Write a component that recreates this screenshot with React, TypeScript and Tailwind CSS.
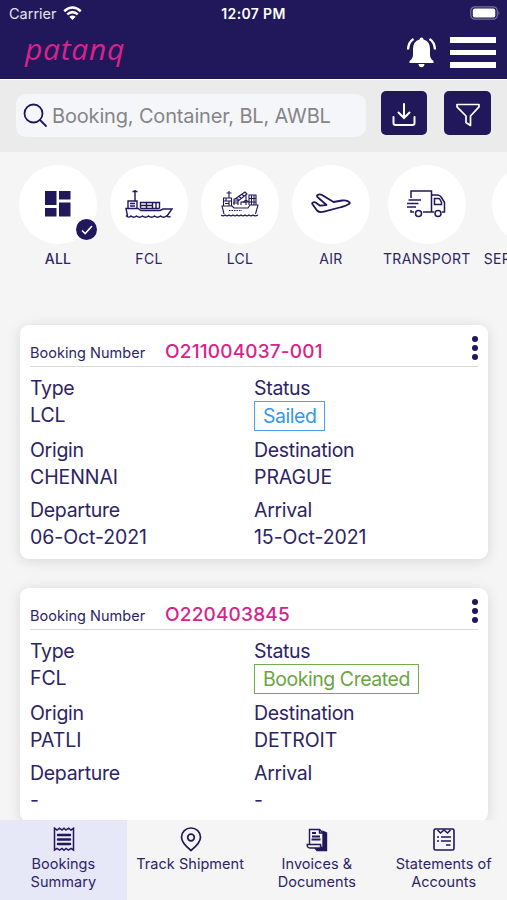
import React from "react";

type Booking = {
  number: string;
  type: string;
  status: string;
  statusStyle: string;
  origin: string;
  destination: string;
  departure: string;
  arrival: string;
};

const bookings: Booking[] = [
  {
    number: "O211004037-001",
    type: "LCL",
    status: "Sailed",
    statusStyle: "border-[#4aa3e8] text-[#3498e8]",
    origin: "CHENNAI",
    destination: "PRAGUE",
    departure: "06-Oct-2021",
    arrival: "15-Oct-2021",
  },
  {
    number: "O220403845",
    type: "FCL",
    status: "Booking Created",
    statusStyle: "border-[#73ad4d] text-[#6ba544]",
    origin: "PATLI",
    destination: "DETROIT",
    departure: "-",
    arrival: "-",
  },
];

const AllIcon = () => (
  <svg width="26" height="26" viewBox="0 0 26 26" fill="#21175b">
    <path d="M0 0h11.5v14H0zM14 0h11.5v8.5H14zM0 17h11.5v8.5H0zM14 11.5h11.5v14H14z" />
  </svg>
);

const ShipIcon = () => (
  <svg width="48" height="30" viewBox="0 0 48 30" fill="none" stroke="#21175b" strokeWidth="1.4">
    <path d="M10 12V1M7.500 2.500h5M3 19v-7h9v7M5 14.500h5M5 17h5" />
    <path d="M15.500 19.500v-6h19v6M15.500 19.500h19M21.500 13.500v6M27.500 13.500v6M31 13.500v6M15.500 16.500h12" />
    <path d="M2.500 27 1 19.500h12l3 2h19l3-1.500h9l-5 7" />
    <path d="M1 26.500q2.500 3 5 .5 2.500 2.500 5.500 0 3 2.500 6 0 3 2.500 6 0 3 2.500 6 0 3 2.500 6 0 3 2.500 6 0 2 1.500 4 .500" />
  </svg>
);

const CraneShipIcon = () => (
  <svg width="38" height="27" viewBox="0 0 38 27" fill="none" stroke="#21175b" strokeWidth="1.100">
    <path d="M8 8V1M5.500 3h5M2.500 16V8h8v8M2.500 11h8M5 8v3M8 11v5M4 13.500h4" />
    <path d="M13 15V9h4v6M13 11h4M14 9l10-7 2 2-9 7M18 6.500l2 1.500M21 4.500l2 1.500M25 4v6M22.500 12l2.500-2 2.500 2zM12 13h5" />
    <path d="M28 15V5h7v10M30.500 5v10M33 5v10M28 8.500h7M28 12h7M20 15v-3h5v3" />
    <path d="M3 24 1 16h10l2 2h14l2-3h8l-2.500 9" />
    <path d="M8 20.500h13" strokeDasharray="1.500 1" />
    <path d="M0 25q2 1.800 4 0 2 1.800 4 0 2 1.800 4 0 2 1.800 4 0 2 1.800 4 0 2 1.800 4 0 2 1.800 4 0 2 1.800 4 0 2 1.800 5 0" />
  </svg>
);

const PlaneIcon = () => (
  <svg width="40" height="22" viewBox="0 0 40 22" fill="none" stroke="#21175b" strokeWidth="1.800" strokeLinejoin="round">
    <path d="M6 2.500Q8.500.5 11 2l11.500 7 8.500-1.500q5-.8 7.500 1.800.8.900-.6 1.800-3 2-7.400 2.900L13 18.700q-4.500 1.300-7-1.200L1.300 11q-.5-1.200 1-1.700 1.500-.4 2.700.4l4 3 6.500-.7-8-7q-1.800-1.300-1.500-2.500z" />
  </svg>
);

const TruckIcon = () => (
  <svg width="40" height="28" viewBox="0 0 40 28" fill="none" stroke="#21175b" strokeWidth="1.500">
    <path d="M5 8V1h20.500v21H17M5 20v2h3M2.500 10H15M1 13.500h11.500M1 17h9M25.500 5h6q2.500 0 4 2.500l3 5V22h-2.500M28 22h-2.500" />
    <path d="M28.500 8.500h4q1 0 1.500 1l1.500 3v2h-7z" />
    <circle cx="12.500" cy="23.500" r="3" />
    <circle cx="32" cy="23.500" r="3" />
  </svg>
);

const categories = [
  { label: "ALL", icon: <AllIcon />, active: true },
  { label: "FCL", icon: <ShipIcon /> },
  { label: "LCL", icon: <CraneShipIcon /> },
  { label: "AIR", icon: <PlaneIcon /> },
  { label: "TRANSPORT", icon: <TruckIcon /> },
  { label: "SERVICES", icon: null },
];

const ReceiptIcon = () => (
  <svg width="22" height="25" viewBox="0 0 22 25" fill="none" stroke="#21175b" strokeWidth="1.500">
    <path d="M1.500 1.200 4 3l2.500-1.800L9 3l2-1.800L13 3l2.500-1.800L18 3l2.500-1.800v22L18 21.500l-2.500 1.700-2.500-1.700-2 1.700-2-1.700-2.500 1.700L4 21.500l-2.500 1.700z" />
    <path d="M5 8h12M5 12.500h12M5 17h12" strokeWidth="2.400" strokeLinecap="round" />
  </svg>
);

const PinIcon = () => (
  <svg width="22" height="25" viewBox="0 0 22 25" fill="none" stroke="#21175b" strokeWidth="1.700">
    <path d="M11 23.500Q1.500 16 1.500 10.300a9.500 9.300 0 0 1 19 0Q20.500 16 11 23.500z" />
    <circle cx="11" cy="10.500" r="3.300" />
  </svg>
);

const InvoiceIcon = () => (
  <svg width="22" height="24" viewBox="0 0 22 24" fill="none" stroke="#21175b" strokeWidth="1.400">
    <path d="M17 3.500 20.500 5v17.500H11L9 20l8-1z" fill="#21175b" />
    <path d="M3.500 16V1.500h10L17 5v15q-2.500 0-2.500-3.500H1.200Q1 20 4 20h13" fill="#f5f5f5" />
    <path d="M6 5h4M6 8.500h8M5.500 11.500h9" strokeWidth="1.800" />
    <path d="M13.500 1.500V5H17" />
  </svg>
);

const StatementIcon = () => (
  <svg width="22" height="23" viewBox="0 0 22 23" fill="none" stroke="#21175b" strokeWidth="1.600">
    <rect x="1" y="1" width="20" height="21" rx="1.500" />
    <path d="m4.500 2 3 3L11 2l3.500 3 3-3" />
    <path d="M4 9h2M8 9h10M4 13h2M8 13h10M13 17h4.500" strokeWidth="1.700" />
  </svg>
);

const tabs = [
  { lines: ["Bookings", "Summary"], icon: <ReceiptIcon />, active: true },
  { lines: ["Track Shipment"], icon: <PinIcon /> },
  { lines: ["Invoices &", "Documents"], icon: <InvoiceIcon /> },
  { lines: ["Statements of", "Accounts"], icon: <StatementIcon /> },
];

const StatusBar = () => (
  <div className="flex h-[28px] items-center px-[9px] text-[14.500px] leading-none text-white">
    <div className="flex flex-1 items-center gap-[6px]">
      <span className="text-[#e6e4f0]">Carrier</span>
      <svg width="19" height="14" viewBox="0 0 19 14" fill="none" stroke="#fff" strokeWidth="2.500" className="-mt-[2px]">
        <path d="M1.200 5.200q8.300-7.400 16.600 0M4.200 8.400q5.300-4.600 10.600 0" />
        <path d="M6.300 10.700q3.200-2.600 6.400 0L9.500 14z" fill="#fff" stroke="none" />
      </svg>
    </div>
    <span className="text-[14px] font-semibold tracking-[0.35px]">12:07 PM</span>
    <div className="flex flex-1 justify-end">
      <svg width="31" height="14" viewBox="0 0 31 14" className="-mt-[2px] -mr-[3px]">
        <rect x="0.800" y="0.800" width="26.500" height="12.400" rx="4" fill="none" stroke="#77719c" strokeWidth="1.200" />
        <rect x="2.800" y="2.600" width="22.500" height="8.800" rx="2" fill="#fff" />
        <path d="M28.500 5q2 2 0 4z" fill="#77719c" />
      </svg>
    </div>
  </div>
);

const Header = () => (
  <header className="h-[79px] shrink-0 bg-[#21175b]">
    <StatusBar />
    <div className="flex h-[49px] items-center pr-[11px] pl-[25px]">
      <span className="mb-[7px] flex-1 font-['Open_Sans',sans-serif] text-[30px] leading-[30px] tracking-[0.7px] text-[#d8238b] italic">
        patanq
      </span>
      <svg width="31" height="31" viewBox="0 0 31 31" fill="#fff">
        <path d="M15.500.5a2 2 0 0 1 2 2q6.500 2 6.500 9v6q0 4 3.500 6.500V26h-24v-2Q7 21.500 7 17.500v-6q0-7 6.500-9a2 2 0 0 1 2-2zM12.500 27h6q-.5 3.300-3 3.300t-3-3.300z" />
        <path d="M7.500 2Q2.500 5 2 12.500M23.500 2q5 3 5.500 10.500" fill="none" stroke="#fff" strokeWidth="2.300" />
      </svg>
      <div className="ml-[13px] flex flex-col gap-[7px]">
        <div className="h-[5.500px] w-[46px] bg-white" />
        <div className="h-[5.500px] w-[46px] bg-white" />
        <div className="h-[5.500px] w-[46px] bg-white" />
      </div>
    </div>
  </header>
);

const SearchBar = () => (
  <div className="flex h-[73px] shrink-0 items-start border-t border-white bg-[#ebebeb] pt-[11px] pr-[16px] pl-[16px]">
    <div className="mt-[3px] flex h-[43px] w-[350px] items-center rounded-[10px] bg-[#f5f6fa] pl-[7px]">
      <svg width="25" height="25" viewBox="0 0 25 25" fill="none" stroke="#21175b" strokeWidth="1.800" strokeLinecap="round">
        <circle cx="10.500" cy="10.500" r="9" />
        <path d="m17 17 6 6" />
      </svg>
      <span className="ml-[4px] text-[20px] tracking-[-0.16px] whitespace-nowrap text-[#858587]">
        Booking, Container, BL, AWBL
      </span>
    </div>
    <button className="ml-[15px] flex h-[44px] w-[46px] items-center justify-center rounded-[5px] bg-[#21175b]">
      <svg width="24" height="24" viewBox="0 0 24 24" fill="none" stroke="#fff" strokeWidth="2" strokeLinecap="round" className="mt-1">
        <path d="M12 1v14M6.500 9.500 12 15l5.500-5.500M1.500 14v6q0 2 2 2h17q2 0 2-2v-6" />
      </svg>
    </button>
    <button className="ml-[17px] flex h-[44px] w-[47px] items-center justify-center rounded-[5px] bg-[#21175b]">
      <svg width="24" height="24" viewBox="0 0 24 24" fill="none" stroke="#fff" strokeWidth="1.700" strokeLinejoin="round" className="mt-[3px]">
        <path d="M1 1.500h22v2.300L14.500 13v9.500l-4.500-3V13L1 3.800z" />
      </svg>
    </button>
  </div>
);

const Categories = () => (
  <div className="flex h-[173px] shrink-0 gap-[13px] overflow-hidden pt-[13px] pl-[19px]">
    {categories.map((c) => (
      <div key={c.label} className="flex min-w-[78px] shrink-0 flex-col items-center last:w-[94px]">
        <div className="relative flex h-[79px] w-[78px] items-center justify-center rounded-full bg-white">
          <div className="mr-px mb-[2px]">{c.icon}</div>
          {c.active && (
            <div className="absolute right-0 bottom-[4px] flex h-[21px] w-[21px] items-center justify-center rounded-full bg-[#21175b]">
              <svg width="12" height="10" viewBox="0 0 12 10" fill="none" stroke="#fff" strokeWidth="1.600">
                <path d="m1 5.500 3.200 3L11 1" />
              </svg>
            </div>
          )}
        </div>
        <span
          className={`mt-[5px] text-[14px] leading-[20px] tracking-[0.3px] text-[#2d2466] ${
            c.active ? "font-medium" : ""
          } ${c.icon ? "" : "self-start"}`}
        >
          {c.label}
        </span>
      </div>
    ))}
  </div>
);

const Item = ({ label, value }: { label: string; value: string }) => (
  <div className="w-1/2 leading-[27px]">
    <p>{label}</p>
    <p className="tracking-[-0.07px]">{value}</p>
  </div>
);

const BookingCard = ({ booking }: { booking: Booking }) => (
  <div className="h-[234px] shrink-0 rounded-[9px] bg-white px-[10px] text-[19.500px] tracking-[-0.3px] text-[#2d2466] shadow-[0_2px_14px_rgba(0,0,0,0.12)]">
    <div className="flex h-[42px] items-end border-b border-[#d9d9dc] pb-[2px]">
      <span className="mb-px w-[135px] text-[14.500px] leading-[20px] tracking-[0.02px]">Booking Number</span>
      <span className="flex-1 text-[19px] leading-[24px] font-medium tracking-[0.18px] text-[#d8238b]">
        {booking.number}
      </span>
      <div className="mb-[4px] flex flex-col gap-[3px]">
        <div className="h-[6px] w-[6px] rounded-full bg-[#21175b]" />
        <div className="h-[6px] w-[6px] rounded-full bg-[#21175b]" />
        <div className="h-[6px] w-[6px] rounded-full bg-[#21175b]" />
      </div>
    </div>
    <div className="flex pt-[8px]">
      <Item label="Type" value={booking.type} />
      <div className="w-1/2 leading-[27px]">
        <p>Status</p>
        <span
          className={`-mt-px block h-[30px] w-fit border-[1.500px] px-[8px] leading-[28px] tracking-[-0.46px] ${booking.statusStyle}`}
        >
          {booking.status}
        </span>
      </div>
    </div>
    <div className="mt-[6px] flex">
      <Item label="Origin" value={booking.origin} />
      <Item label="Destination" value={booking.destination} />
    </div>
    <div className="mt-[6px] flex">
      <Item label="Departure" value={booking.departure} />
      <Item label="Arrival" value={booking.arrival} />
    </div>
  </div>
);

const TabBar = () => (
  <nav className="flex h-[80px] shrink-0 bg-[#f5f5f5]">
    {tabs.map((tab) => (
      <div
        key={tab.lines[0]}
        className={`flex flex-1 flex-col items-center pt-[7px] text-[14.500px] leading-[18px] tracking-[0.04px] text-[#2d2466] ${
          tab.active ? "bg-[#e7e8f7]" : ""
        }`}
      >
        <div className="ml-px flex h-[25px] items-center">{tab.icon}</div>
        <div className="mt-[3px] text-center whitespace-nowrap">
          {tab.lines.map((line) => (
            <p key={line}>{line}</p>
          ))}
        </div>
      </div>
    ))}
  </nav>
);

const App = () => {
  return (
    <div className="flex h-[900px] w-[507px] flex-col overflow-hidden bg-[#f5f5f5] font-['Inter',sans-serif]">
      <Header />
      <SearchBar />
      <main className="flex min-h-0 flex-1 flex-col overflow-hidden">
        <Categories />
        <div className="flex flex-col gap-[29px] pr-[19px] pl-[20px]">
          {bookings.map((b) => (
            <BookingCard key={b.number} booking={b} />
          ))}
        </div>
      </main>
      <TabBar />
    </div>
  );
};

export default App;
